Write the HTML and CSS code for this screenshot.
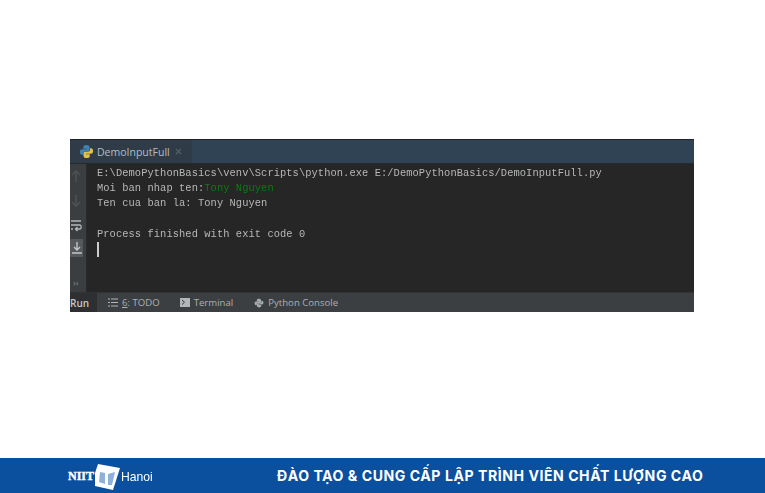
FILE: index.html
```html
<!DOCTYPE html>
<html lang="vi">
<head>
<meta charset="utf-8">
<title>DemoInputFull</title>
<link rel="stylesheet" href="styles.css">
</head>
<body>
<main class="stage">
  <section class="ide">
    <header class="tabbar">
      <div class="tab">
        <svg class="py" viewBox="0 0 16 16" width="15" height="15">
          <path fill="#3f83b5" d="M8 1C5.5 1 4.5 2 4.500 3.500V5H8.500V5.700H3C1.600 5.700 1 7 1 8.500S1.700 11.500 3 11.500H4.500V9.800C4.500 8.700 5.400 8 6.500 8H9.500C10.500 8 11.200 7.200 11.200 6.300V3.300C11.200 2 9.800 1 8 1Z"/>
          <path fill="#e3c24c" d="M8 15C10.500 15 11.500 14 11.500 12.500V11H7.500V10.300H13C14.400 10.300 15 9 15 7.500S14.300 4.500 13 4.500H11.800V6.200C11.800 7.400 10.800 8.300 9.500 8.300H6.500C5.500 8.300 4.800 9 4.800 9.800V12.700C4.800 14 6.200 15 8 15Z"/>
        </svg>
        <span class="tabname">DemoInputFull</span>
        <svg class="close" viewBox="0 0 8 8" width="7" height="7"><path d="M1 1L7 7M7 1L1 7" stroke="#59656d" stroke-width="1.200"/></svg>
      </div>
    </header>
    <div class="body">
      <aside class="rail">
        <svg class="ri dim" viewBox="0 0 12 14" width="12" height="14"><path d="M6 13V2M2 6L6 2L10 6" fill="none" stroke="#4d5052" stroke-width="1.600"/></svg>
        <svg class="ri dim" viewBox="0 0 12 14" width="12" height="14"><path d="M6 1V12M2 8L6 12L10 8" fill="none" stroke="#4d5052" stroke-width="1.600"/></svg>
        <svg class="ri" viewBox="0 0 12 14" width="12" height="14"><path d="M1 2H11M1 6H10C11.500 6 11.500 10 10 10H6M7.500 8L5.500 10L7.500 12M1 10H3" fill="none" stroke="#b4b8ba" stroke-width="1.300"/></svg>
        <div class="active"><svg viewBox="0 0 12 14" width="12" height="14"><path d="M6 1V9M3 6L6 9L9 6M1 12H11" fill="none" stroke="#c2c6c8" stroke-width="1.400"/></svg></div>
        <span class="more">››</span>
      </aside>
      <pre class="console">E:\DemoPythonBasics\venv\Scripts\python.exe E:/DemoPythonBasics/DemoInputFull.py
Moi ban nhap ten:<span class="input">Tony Nguyen</span>
Ten cua ban la: Tony Nguyen

Process finished with exit code 0
<span class="caret"></span></pre>
    </div>
    <footer class="tools">
      <span class="tool run">Run</span>
      <span class="tool todo">
        <svg viewBox="0 0 10 9" width="10" height="9"><path d="M0 1H2M3 1H10M0 4.500H2M3 4.500H10M0 8H2M3 8H10" stroke="#b3b6b8" stroke-width="1.200"/></svg>
        <span><u>6</u>: TODO</span>
      </span>
      <span class="tool term">
        <svg viewBox="0 0 10 9" width="10" height="9"><rect width="10" height="9" fill="#b3b6b8"/><path d="M2 2L4.500 4.200L2 6.500" fill="none" stroke="#35393b" stroke-width="1"/></svg>
        <span>Terminal</span>
      </span>
      <span class="tool pycon">
        <svg viewBox="0 0 16 16" width="10" height="10"><path fill="#a8abad" d="M8 1C5.500 1 4.500 2 4.500 3.500V5H8.500V5.700H3C1.600 5.700 1 7 1 8.500S1.700 11.500 3 11.500H4.500V9.800C4.500 8.700 5.400 8 6.500 8H9.500C10.500 8 11.200 7.200 11.200 6.300V3.300C11.200 2 9.800 1 8 1ZM8 15C10.500 15 11.500 14 11.500 12.500V11H7.500V10.300H13C14.400 10.300 15 9 15 7.500S14.300 4.500 13 4.500H11.800V6.200C11.800 7.400 10.800 8.300 9.500 8.300H6.500C5.500 8.300 4.800 9 4.800 9.800V12.700C4.800 14 6.200 15 8 15Z"/></svg>
        <span>Python Console</span>
      </span>
    </footer>
  </section>
</main>
<footer class="banner">
  <div class="logo">
    <span class="niit">NIIT</span>
    <svg class="book" viewBox="0 0 25 27" width="25" height="27">
      <path fill="#fff" d="M3 1L25 5L18 27L0 23V10Z"/>
      <path fill="#8fb0d8" d="M5 9L10 10V21L4 19ZM13 11L20 9L17 22L13 22Z"/>
    </svg>
    <span class="hanoi">Hanoi</span>
  </div>
  <p class="slogan">ĐÀO TẠO &amp; CUNG CẤP LẬP TRÌNH VIÊN CHẤT LƯỢNG CAO</p>
</footer>
</body>
</html>
```
FILE: styles.css
```css
* { box-sizing: border-box; }
html, body { margin: 0; height: 100%; }
body {
  background: #fff;
  display: flex;
  flex-direction: column;
  height: 493px;
  overflow: hidden;
}
.stage {
  flex: 1;
  padding: 139px 71px 0 70px;
}
.ide {
  height: 173px;
  display: flex;
  flex-direction: column;
  background: #2b2b2b;
  border-top: 1px solid #222;
  font-family: "Open Sans", "Liberation Sans", sans-serif;
}
.tabbar {
  height: 24px;
  background: #2f4354;
  border-bottom: 1px solid #222a30;
  display: flex;
}
.tab {
  width: 122px;
  background: #2f3c47;
  display: flex;
  align-items: center;
  padding-left: 9px;
}
.py { flex: none; }
.tabname {
  margin-left: 3px;
  font-size: 10.5px;
  color: #b2bcc4;
}
.close { margin-left: 5px; }
.body {
  flex: 1;
  display: flex;
  min-height: 0;
}
.rail {
  width: 17px;
  background: #3a3e40;
  border-right: 1px solid #2a2a2a;
  display: flex;
  flex-direction: column;
  align-items: flex-start;
  padding-top: 5px;
  gap: 11px;
}
.ri { flex: none; }
.active {
  width: 13px;
  height: 18px;
  margin-top: -5px;
  background: #55595c;
  display: flex;
  align-items: center;
  justify-content: center;
}
.more {
  margin: 10px 0 0 3px;
  font-size: 9px;
  line-height: 9px;
  color: #8a8d8f;
}
.console {
  margin: 0;
  flex: 1;
  background: #262626;
  padding: 2px 0 0 10px;
  font-family: "Liberation Mono", monospace;
  font-size: 10.4px;
  letter-spacing: .075px;
  line-height: 15.2px;
  color: #b5b8b6;
  filter: blur(.3px);
}
.input { color: #0a7a12; }
.caret {
  display: inline-block;
  width: 2px;
  height: 15px;
  background: #c9cdc9;
  vertical-align: top;
}
.tools {
  height: 20px;
  background: #3b3f41;
  border-top: 1px solid #323232;
  display: flex;
  align-items: center;
  font-size: 9.6px;
  color: #adb0b2;
}
.tool {
  display: flex;
  align-items: center;
  gap: 4px;
  height: 100%;
}
.run {
  width: 27px;
  background: #2d2f30;
  color: #c4c7c9;
  font-weight: 600;
  font-size: 10px;
}
.todo { margin-left: 11px; }
.term { margin-left: 20px; }
.pycon { margin-left: 21px; }
.banner {
  flex: none;
  height: 35px;
  background: #0b4f9f;
  color: #fff;
  display: flex;
  align-items: center;
  padding-left: 68px;
}
.logo {
  width: 209px;
  flex: none;
  display: flex;
  align-items: center;
}
.niit {
  width: 27px;
  font-family: "Liberation Serif", serif;
  font-weight: 700;
  font-size: 12px;
  margin-top: 2px;
  -webkit-text-stroke: .4px #fff;
}
.book { flex: none; margin-top: 2px; }
.hanoi {
  margin: 2px 0 0 1px;
  font-family: "Liberation Sans", sans-serif;
  font-size: 13.5px;
  transform: scaleX(.9);
  transform-origin: left;
}
.slogan {
  margin: 0;
  font-family: Inter, "Liberation Sans", sans-serif;
  font-weight: 700;
  font-size: 14.100px;
  letter-spacing: .53px;
  white-space: nowrap;
}
```
